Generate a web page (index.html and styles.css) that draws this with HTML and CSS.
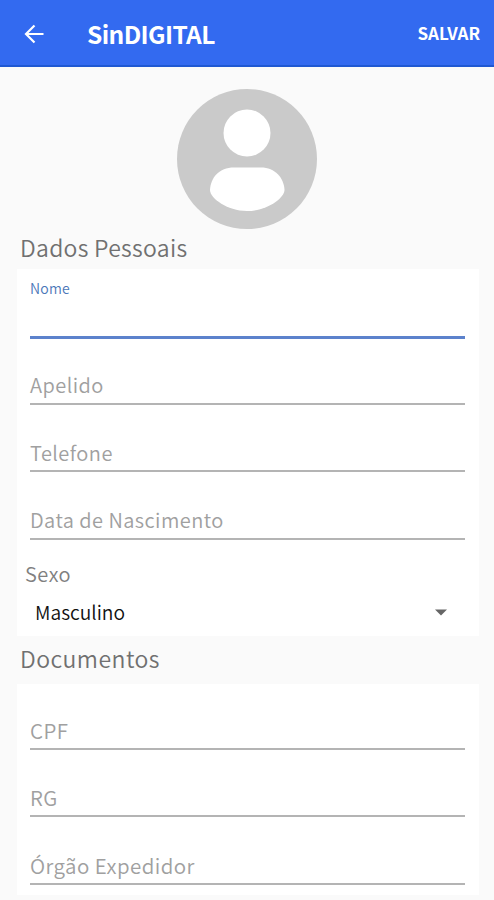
FILE: index.html
```html
<!DOCTYPE html>
<html lang="pt-BR">
<head>
    <meta charset="UTF-8">
    <meta name="viewport" content="width=device-width, initial-scale=1.0">
    <title>SinDIGITAL</title>
    <link rel="stylesheet" href="styles.css">
</head>
<body>
    <header class="topbar">
        <svg class="back" viewBox="0 0 20 20" width="20" height="20">
            <path d="M19.500 10H2M10.500 1.500L2 10L10.500 18.500" />
        </svg>
        <h1>SinDIGITAL</h1>
        <span class="save">SALVAR</span>
    </header>

    <svg class="avatar" viewBox="0 0 140 140" width="140" height="140">
        <circle cx="70" cy="70" r="70" fill="#cacaca" />
        <circle cx="70" cy="44" r="23.500" fill="#fff" />
        <path d="M57 78.500H84C98 78.500 107 89 107.500 101C107.500 109 90 122 70 122C50 122 33 109 33 101C33.500 89 42 78.500 57 78.500Z" fill="#fff" />
    </svg>

    <h2>Dados Pessoais</h2>
    <section class="card personal">
        <div class="field active">Nome</div>
        <div class="field">Apelido</div>
        <div class="field">Telefone</div>
        <div class="field">Data de Nascimento</div>
        <div class="sexo">Sexo</div>
        <div class="select">
            <span>Masculino</span>
            <svg viewBox="0 0 12 7" width="12" height="7"><path d="M0 0.500H12L6 6.500Z" /></svg>
        </div>
    </section>

    <h2 class="second">Documentos</h2>
    <section class="card documents">
        <div class="field">CPF</div>
        <div class="field">RG</div>
        <div class="field">Órgão Expedidor</div>
    </section>
</body>
</html>
```
FILE: styles.css
```css
* {
    box-sizing: border-box;
}

body {
    margin: 0;
    height: 900px;
    overflow: hidden;
    background-color: #fafafa;
    font-family: 'Noto Sans CJK SC', 'Noto Sans', sans-serif;
}

.topbar {
    display: flex;
    align-items: center;
    height: 67px;
    padding: 0 14px 0 24px;
    background-color: #336af0;
    border-bottom: 2px solid #1f58d2;
    color: #fff;
}

.back {
    margin-top: 2px;
    fill: none;
    stroke: #fff;
    stroke-width: 2.2;
}

h1 {
    flex: 1;
    margin: 2px 0 0 43px;
    font-size: 24.5px;
    font-weight: bold;
    line-height: 32px;
    letter-spacing: -0.6px;
}

.save {
    font-size: 17px;
    font-weight: bold;
}

.avatar {
    display: block;
    margin: 21.5px auto 0;
}

h2 {
    margin: 0;
    padding-left: 20px;
    height: 40.5px;
    color: #707070;
    font-size: 23px;
    font-weight: 350;
    line-height: 36px;
    letter-spacing: 0.3px;
}

.card {
    margin: 0 15px 0 17px;
    padding: 0 14px 0 13px;
    background-color: #fff;
}

.personal {
    height: 367px;
}

.second {
    height: 48px;
    line-height: 45px;
    letter-spacing: 0.45px;
}

.documents {
    height: 211px;
}

.field {
    display: flex;
    align-items: flex-end;
    height: 67.5px;
    padding-bottom: 2.4px;
    border-bottom: 2px solid #b4b4b4;
    color: #a0a0a0;
    font-size: 20px;
    font-weight: 350;
    line-height: 30px;
    letter-spacing: 0.45px;
}

.documents .field {
    font-size: 20.5px;
    padding-bottom: 3px;
}

.documents .field:first-child {
    height: 65.5px;
}

/* focused input, label floats to the top */
.active {
    align-items: flex-start;
    height: 70px;
    padding-top: 9px;
    border-bottom: 3px solid #5c82cc;
    color: #4a76b8;
    font-size: 14px;
    line-height: 20px;
    letter-spacing: 0.25px;
}

.active + .field {
    height: 65.5px;
}

.sexo {
    margin: 18px 0 0 -5px;
    color: #808080;
    font-size: 20px;
    font-weight: 350;
    line-height: 32px;
    letter-spacing: 0.5px;
}

.select {
    display: flex;
    align-items: center;
    justify-content: space-between;
    padding: 0 18px 0 5px;
    margin-top: 6px;
    color: #111;
    font-size: 19.2px;
    font-weight: 350;
    line-height: 32px;
}

.select svg {
    margin-top: 1px;
    fill: #666;
}
```
